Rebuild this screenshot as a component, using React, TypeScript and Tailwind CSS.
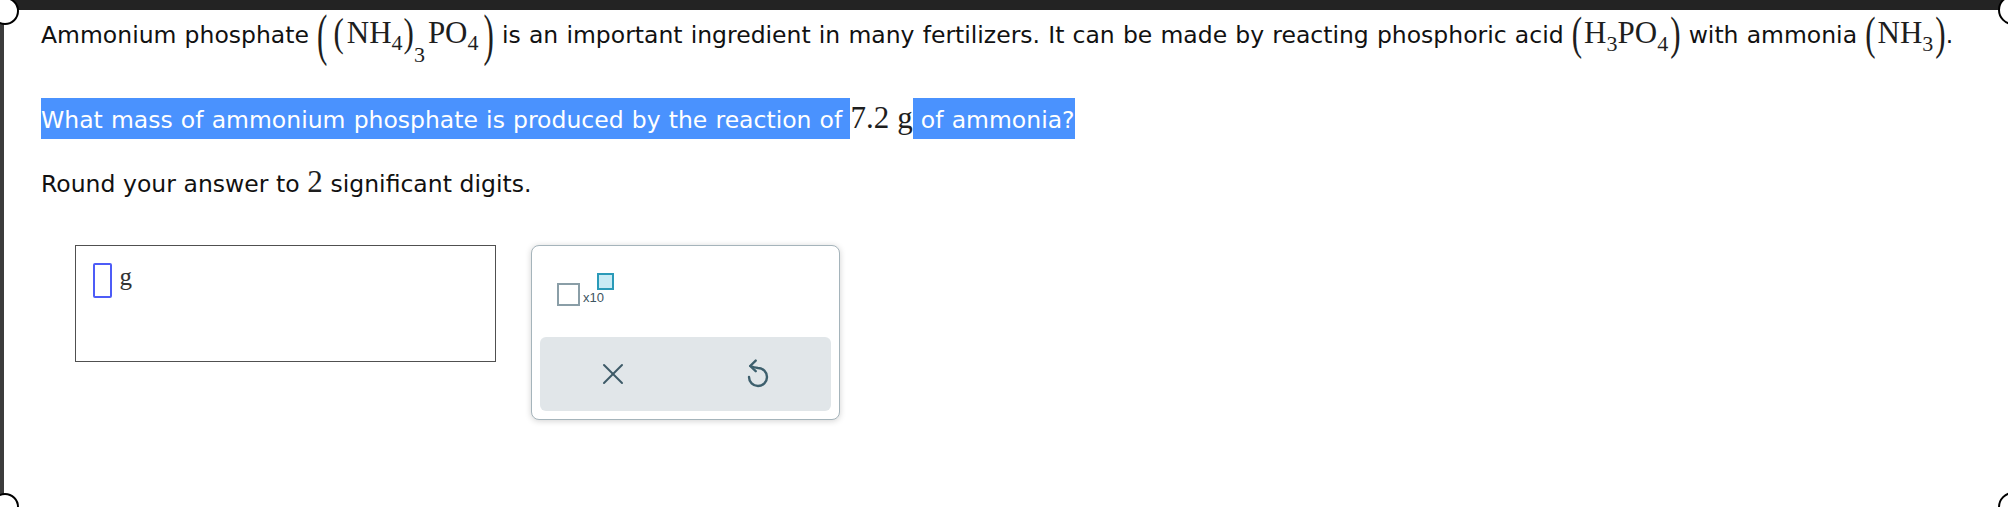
import React from 'react';

const serif = "font-['Liberation_Serif','Times_New_Roman',serif] text-[31px] leading-none text-[#1e1e1e] [word-spacing:0px]";

function Sub({ children, className = 'top-[7px]' }: { children: React.ReactNode; className?: string }) {
  return <span className={`relative text-[22px] leading-none ${className}`}>{children}</span>;
}

function Circle({ className }: { className: string }) {
  return <div className={`absolute rounded-full border-2 border-black bg-white ${className}`} />;
}

export default function App() {
  return (
    <div className="relative h-[507px] w-[2008px] overflow-hidden bg-white font-['Verdana','DejaVu_Sans',sans-serif] text-[23.5px] text-[#111] [word-spacing:0.7px]">
      <div className="h-[10px] bg-[#232323]" />
      <div className="flex h-[497px]">
        <div className="w-[4px] bg-[#3c3c3c]" />
        <div className="flex-1">
          {/* question text */}
          <p className="whitespace-nowrap pl-[37px] leading-[50px]">
            Ammonium phosphate{' '}
            <span className={serif}>
              <span className="relative top-[2px] mr-[6px] inline-block scale-y-[1.85]">(</span>
              <span className="mr-[3px] inline-block scale-y-[1.3]">(</span>
              NH<Sub>4</Sub>
              <span className="ml-[1px] inline-block scale-y-[1.3]">)</span>
              <Sub className="top-[19px]">3</Sub>
              <span className="ml-[3px]">PO</span>
              <Sub>4</Sub>
              <span className="relative top-[2px] ml-[5px] inline-block scale-y-[1.85]">)</span>
            </span>{' '}
            is an important ingredient in many fertilizers. It can be made by reacting phosphoric acid{' '}
            <span className={serif}>
              <span className="relative top-[1px] mr-[2px] inline-block scale-y-[1.5]">(</span>
              H<Sub className="top-[8px]">3</Sub>PO<Sub className="top-[8px]">4</Sub>
              <span className="relative top-[1px] ml-[2px] inline-block scale-y-[1.5]">)</span>
            </span>{' '}
            with ammonia{' '}
            <span className={serif}>
              <span className="relative top-[1px] mr-[2px] inline-block scale-y-[1.5]">(</span>
              NH<Sub className="top-[8px]">3</Sub>
              <span className="relative top-[1px] ml-[2px] inline-block scale-y-[1.5]">)</span>
            </span>
            .
          </p>

          <p className="mt-[40px] whitespace-nowrap pl-[37px] leading-[40px]">
            <span className="bg-[#4a92fe] pt-[8px] pb-[5px] text-white">What mass of ammonium phosphate is produced by the reaction of </span>
            <span className={serif}>
              7.2<span className="ml-[8px]">g</span>
            </span>
            <span className="bg-[#4a92fe] pt-[8px] pb-[5px] text-white"> of ammonia?</span>
          </p>

          <p className="mt-[24px] whitespace-nowrap pl-[37px] leading-[40px] [word-spacing:0.2px]">
            Round your answer to <span className={serif}>2</span> significant digits.
          </p>

          {/* answer area */}
          <div className="mt-[41px] ml-[71px] flex items-start gap-[35px]">
            <div className="flex h-[117px] w-[421px] items-start border-[1.5px] border-[#505050] p-[16.5px]">
              <div className="h-[35px] w-[19px] rounded-[2px] border-2 border-[#4d5cf7]" />
              <span className="mt-[1px] ml-[8px] font-['Liberation_Serif',serif] text-[25px] leading-none text-[#333]">g</span>
            </div>

            <div className="flex h-[175px] w-[309px] flex-col rounded-[8px] border border-[#a5b4bb] bg-white shadow-[0_1px_6px_rgba(0,0,0,0.18)]">
              <div className="flex flex-1 items-start pt-[27px] pl-[25px]">
                <div className="mt-[10px] h-[23px] w-[23px] border-2 border-[#8a9ea7]" />
                <div className="mt-[18px] ml-[3px] font-['Liberation_Sans',sans-serif] text-[13px] leading-none text-[#3d5561]">x10</div>
                <div className="-ml-[7px] h-[17px] w-[17px] border-2 border-[#2a9ab8] bg-[#c8ebf5]" />
              </div>
              <div className="mx-[8px] mb-[8px] flex h-[74px] rounded-[6px] bg-[#e1e6e9]">
                <div className="flex flex-1 items-center justify-center">
                  <svg width="22" height="22" viewBox="0 0 22 22" fill="none" stroke="#3d5a67" strokeWidth="2" strokeLinecap="round">
                    <path d="M2 2 20 20" />
                    <path d="M20 2 2 20" />
                  </svg>
                </div>
                <div className="flex flex-1 items-center justify-center">
                  <svg width="28" height="30" viewBox="0 0 28 30" fill="none" stroke="#3d5f6d" strokeWidth="2.4" strokeLinecap="round" strokeLinejoin="round">
                    <path d="M6.5 7 Q10 8.6 14 9 A9 9 0 1 1 5 18" />
                    <path d="M11.7 1.6 6.2 7 11.7 12.2" />
                  </svg>
                </div>
              </div>
            </div>
          </div>
        </div>
      </div>

      {/* crop handles */}
      <Circle className="top-[-3px] left-[-9px] h-[28px] w-[28px]" />
      <Circle className="top-[-5px] left-[1998px] h-[30px] w-[30px]" />
      <Circle className="top-[493px] left-[-9px] h-[28px] w-[28px]" />
      <Circle className="top-[492px] left-[1998px] h-[30px] w-[30px]" />
    </div>
  );
}
